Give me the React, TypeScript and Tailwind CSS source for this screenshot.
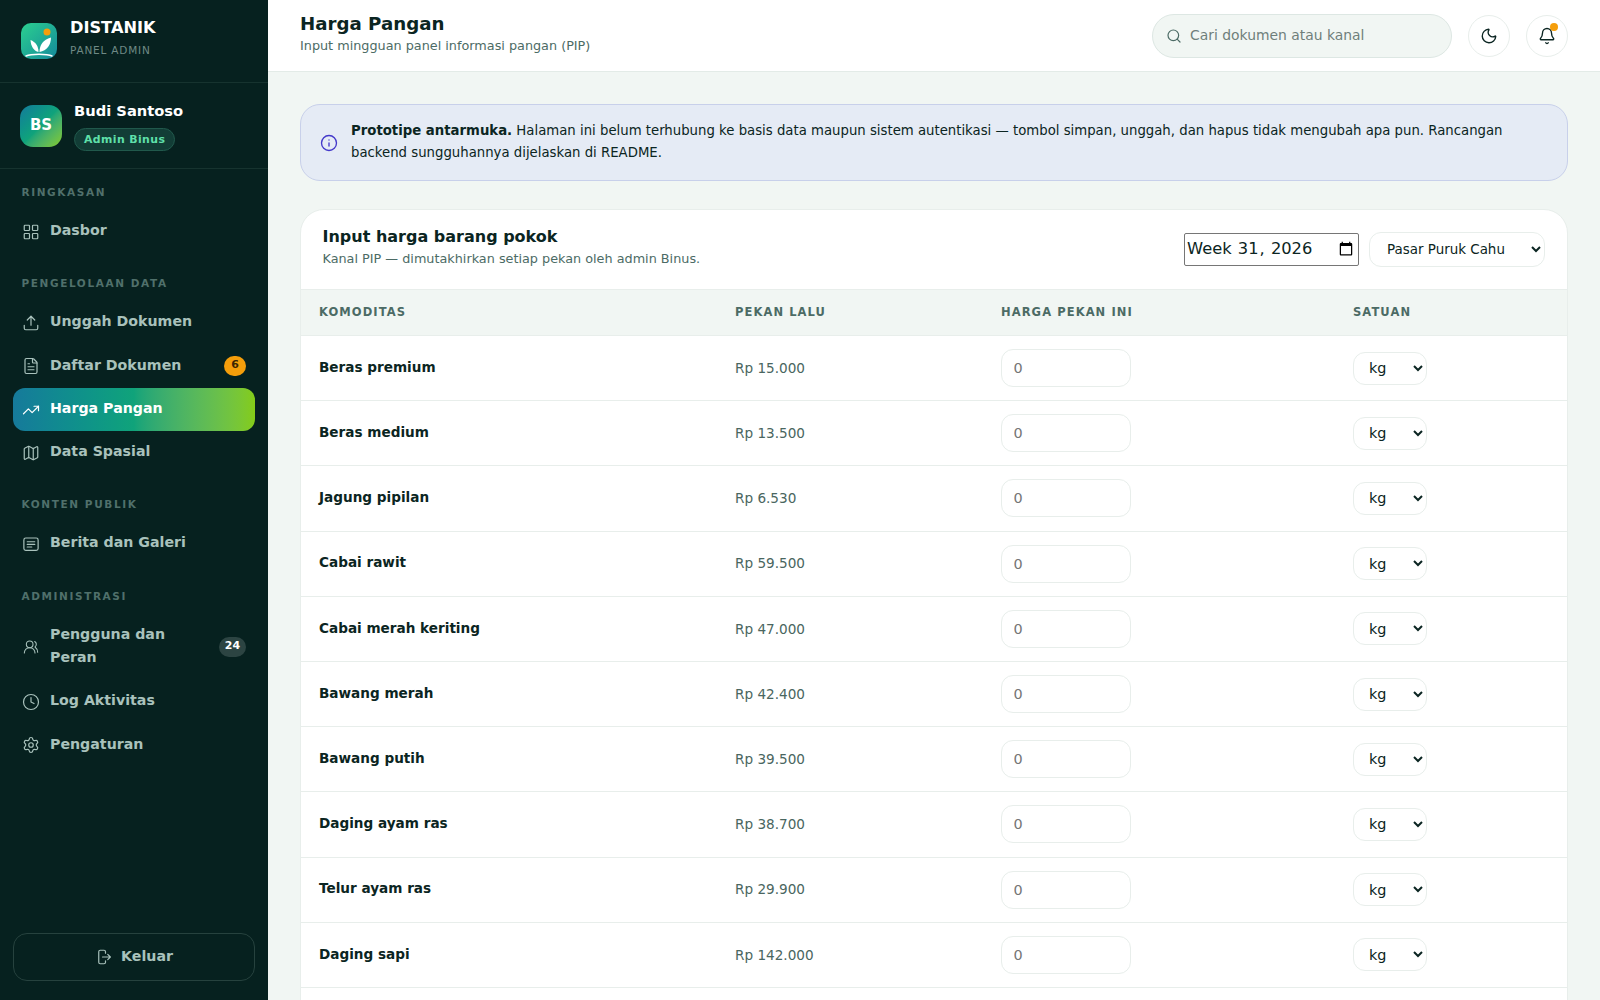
import {
  Bell,
  Clock,
  FileText,
  Info,
  LayoutGrid,
  Map,
  Moon,
  Search,
  Settings,
  TrendingUp,
  Upload,
  UsersRound,
} from "lucide-react";
import type { ComponentType, ReactNode } from "react";

const font = { fontFamily: '"DejaVu Sans", sans-serif' };

type IconProps = { className?: string; strokeWidth?: number };

function NewsIcon({ className, strokeWidth = 1.6 }: IconProps) {
  return (
    <svg viewBox="0 0 24 24" fill="none" stroke="currentColor" strokeWidth={strokeWidth} strokeLinecap="round" className={className}>
      <rect x="2.500" y="4" width="19" height="16.500" rx="2.500" />
      <path d="M7 9h10M7 12.500h10M7 16h6" />
    </svg>
  );
}

function ExitIcon({ className, strokeWidth = 1.6 }: IconProps) {
  return (
    <svg viewBox="0 0 24 24" fill="none" stroke="currentColor" strokeWidth={strokeWidth} strokeLinecap="round" strokeLinejoin="round" className={className}>
      <path d="M14 7V5a2 2 0 0 0-2-2H7a2 2 0 0 0-2 2v14a2 2 0 0 0 2 2h5a2 2 0 0 0 2-2v-2" />
      <path d="M10 12h10M17 8.500l3.500 3.500-3.500 3.500" />
    </svg>
  );
}

// this one sits a bit smaller than the other nav icons
function PeopleIcon({ strokeWidth }: IconProps) {
  return <UsersRound className="mx-px h-4 w-4 shrink-0" strokeWidth={strokeWidth} />;
}

type NavItem = {
  label: string;
  icon: ComponentType<IconProps>;
  active?: boolean;
  badge?: ReactNode;
};

const groups: { title: string; items: NavItem[] }[] = [
  { title: "RINGKASAN", items: [{ label: "Dasbor", icon: LayoutGrid }] },
  {
    title: "PENGELOLAAN DATA",
    items: [
      { label: "Unggah Dokumen", icon: Upload },
      {
        label: "Daftar Dokumen",
        icon: FileText,
        badge: (
          <span className="flex h-5 min-w-[22px] items-center justify-center rounded-full bg-[#f59e0b] pb-[1px] text-[11px] font-bold text-[#3b2503]">
            6
          </span>
        ),
      },
      { label: "Harga Pangan", icon: TrendingUp, active: true },
      { label: "Data Spasial", icon: Map },
    ],
  },
  { title: "KONTEN PUBLIK", items: [{ label: "Berita dan Galeri", icon: NewsIcon }] },
  {
    title: "ADMINISTRASI",
    items: [
      {
        label: "Pengguna dan Peran",
        icon: PeopleIcon,
        badge: (
          <span className="flex h-5 min-w-[27px] items-center justify-center rounded-full bg-[#2c4442] pb-[2px] text-[11px] font-bold text-white">
            24
          </span>
        ),
      },
      { label: "Log Aktivitas", icon: Clock },
      { label: "Pengaturan", icon: Settings },
    ],
  },
];

const prices = [
  ["Beras premium", "Rp 15.000"],
  ["Beras medium", "Rp 13.500"],
  ["Jagung pipilan", "Rp 6.530"],
  ["Cabai rawit", "Rp 59.500"],
  ["Cabai merah keriting", "Rp 47.000"],
  ["Bawang merah", "Rp 42.400"],
  ["Bawang putih", "Rp 39.500"],
  ["Daging ayam ras", "Rp 38.700"],
  ["Telur ayam ras", "Rp 29.900"],
  ["Daging sapi", "Rp 142.000"],
  ["Minyak goreng", "Rp 18.200"],
];

function Sidebar() {
  return (
    <aside className="flex h-screen w-[268px] shrink-0 flex-col bg-[#06211f]">
      <div className="flex h-[83px] items-center gap-[13px] border-b border-[#16332f] pl-[21px]">
        <svg viewBox="0 0 36 36" className="h-9 w-9 shrink-0">
          <defs>
            <linearGradient id="logo" x1="0" y1="0" x2="1" y2="1">
              <stop offset="0" stopColor="#2bd08f" />
              <stop offset="1" stopColor="#14899b" />
            </linearGradient>
          </defs>
          <rect width="36" height="36" rx="10" fill="url(#logo)" />
          <circle cx="26" cy="9" r="3.500" fill="#f59e0b" />
          <path d="M17.500 29c-4.500-1-7.500-5-8-12 5 2 8 6 8 12Z" fill="#fff" />
          <path d="M18.500 29c0-7 3.500-12 11.500-14.500 0 7.500-4 13-11.500 14.500Z" fill="#fff" />
          <path d="M5 33c5-2.500 21-2.500 26 0" fill="none" stroke="#fff" strokeWidth="1.500" strokeLinecap="round" />
        </svg>
        <div className="-mt-[8px]">
          <div className="text-[16.200px] leading-[24px] font-bold text-white">DISTANIK</div>
          <div className="mt-[2px] text-[10.500px] leading-[16px] tracking-[0.8px] text-[#6f8a85]">PANEL ADMIN</div>
        </div>
      </div>
      <div className="flex h-[86px] items-center gap-3 border-b border-[#16332f] pl-5">
        <div className="flex h-[42px] w-[42px] items-center justify-center rounded-[13px] bg-gradient-to-br from-[#167a9b] via-[#10a37a] to-[#84cc16] text-[15px] font-bold text-white">
          BS
        </div>
        <div>
          <div className="text-[14.700px] leading-[22px] font-bold text-white">Budi Santoso</div>
          <span className="mt-[6px] inline-block rounded-full border border-[#21594c] bg-[#123d36] px-[9px] text-[10.900px] leading-[21px] font-bold tracking-[0.4px] text-[#5fe0aa]">
            Admin Binus
          </span>
        </div>
      </div>
      <nav className="flex-1 px-[13px]">
        {groups.map((g) => (
          <div key={g.title} className="pt-[15px] pb-[7px]">
            <div className="px-[8.500px] pb-[9px] text-[10.500px] leading-[17px] font-bold tracking-[1.600px] text-[#50706b]">
              {g.title}
            </div>
            {g.items.map((item) => (
              <div
                key={item.label}
                className={
                  item.active
                    ? "flex items-center gap-[10.500px] rounded-xl bg-gradient-to-r from-[#167a9b] via-[#10a37a] to-[#84cc16] pr-[9px] pl-[8.500px] text-white"
                    : "flex items-center gap-[10.500px] rounded-xl pr-[9px] pl-[8.500px] text-[#a9c2bc]"
                }
              >
                <item.icon className="h-[18px] w-[18px] shrink-0" strokeWidth={1.600} />
                <span className="relative -top-[1px] flex-1 py-[10px] pr-2 text-[14.200px] leading-[23.300px] font-bold">{item.label}</span>
                {item.badge}
              </div>
            ))}
          </div>
        ))}
      </nav>
      <div className="px-[13px] pb-[19px]">
        <div className="flex h-12 items-center justify-center gap-[8px] rounded-[14px] border border-[#26423e] text-[14.200px] font-bold text-[#a9c2bc]">
          <ExitIcon className="h-[18px] w-[18px]" />
          <span className="-mt-[1px]">Keluar</span>
        </div>
      </div>
    </aside>
  );
}

function Topbar() {
  return (
    <header className="flex h-[72px] shrink-0 items-center justify-between border-b border-[#e3ebe7] bg-white pr-8 pl-8">
      <div className="-mt-[6px]">
        <h1 className="text-[18.200px] leading-[26px] font-bold text-[#0b2522]">Harga Pangan</h1>
        <p className="text-[12.800px] leading-[18px] text-[#4c6b65]">Input mingguan panel informasi pangan (PIP)</p>
      </div>
      <div className="flex items-center gap-4">
        <div className="flex h-11 w-[300px] items-center gap-[8px] rounded-[22px] border border-[#dde7e3] bg-[#f1f6f3] pl-[13px]">
          <Search className="h-4 w-4 text-[#4c6b65]" strokeWidth={1.800} />
          <span className="-mt-[1px] text-[13.900px] text-[#6f7f7b]">Cari dokumen atau kanal</span>
        </div>
        <div className="flex h-[42px] w-[42px] items-center justify-center rounded-full border border-[#e8eeeb] text-[#0b2522]">
          <Moon className="h-[18px] w-[18px]" strokeWidth={1.800} />
        </div>
        <div className="relative flex h-[42px] w-[42px] items-center justify-center rounded-full border border-[#e8eeeb] text-[#0b2522]">
          <Bell className="h-[18px] w-[18px]" strokeWidth={1.800} />
          <span className="absolute top-[7.500px] right-[9px] h-2 w-2 rounded-full bg-[#f59e0b]" />
        </div>
      </div>
    </header>
  );
}

function PriceTable() {
  return (
    <table className="w-full table-fixed border-collapse text-left">
      <colgroup>
        <col className="w-[416px]" />
        <col className="w-[266px]" />
        <col className="w-[352px]" />
        <col />
      </colgroup>
      <thead>
        <tr className="h-[46px] border-y border-[#e8eeeb] bg-[#f1f6f3] text-[11.500px] font-bold tracking-[1.080px] text-[#4c6b65]">
          <th className="px-[18px] pt-[1px] font-bold">KOMODITAS</th>
          <th className="px-[18px] pt-[1px] font-bold">PEKAN LALU</th>
          <th className="px-[18px] pt-[1px] font-bold">HARGA PEKAN INI</th>
          <th className="px-[18px] pt-[1px] font-bold">SATUAN</th>
        </tr>
      </thead>
      <tbody>
        {prices.map(([name, last]) => (
          <tr key={name} className="h-[65.200px] border-b border-[#e8eeeb]">
            <td className="px-[18px] text-[13.600px] font-bold text-[#0b2522]">
              <span className="relative -top-[1px]">{name}</span>
            </td>
            <td className="px-[18px] text-[13.600px] text-[#4a6660]">{last}</td>
            <td className="px-[18px]">
              <input
                placeholder="0"
                className="h-[38px] w-[130px] rounded-[12px] border border-[#e8eeeb] px-[11.500px] text-[14.400px] placeholder:text-[#757575]"
              />
            </td>
            <td className="px-[18px]">
              <select className="h-[33px] w-[74px] rounded-[12px] border border-[#e8eeeb] pl-[11px] text-[14.400px] text-[#0b2522]">
                <option>kg</option>
              </select>
            </td>
          </tr>
        ))}
      </tbody>
    </table>
  );
}

export default function App() {
  return (
    <div className="flex h-screen overflow-hidden bg-[#f1f6f3]" style={font}>
      <Sidebar />
      <main className="flex min-w-0 flex-1 flex-col">
        <Topbar />
        <div className="flex-1 overflow-hidden px-8 pt-8">
          <div className="flex h-[77px] items-center gap-[13px] rounded-[20px] border border-[#c8d0ea] bg-[#e5ebf5] pr-5 pl-[19px]">
            <Info className="h-[18px] w-[18px] shrink-0 text-[#4338ca]" strokeWidth={1.800} />
            <p className="-mt-[1px] text-[13.280px] leading-[22px] text-[#0b2522]">
              <b>Prototipe antarmuka.</b> Halaman ini belum terhubung ke basis data maupun sistem autentikasi — tombol
              simpan, unggah, dan hapus tidak mengubah apa pun. Rancangan backend sungguhannya dijelaskan di README.
            </p>
          </div>
          <section className="mt-7 overflow-hidden rounded-t-[24px] border border-[#e8eeeb] bg-white">
            <div className="flex h-[79px] items-center justify-between pr-[22px] pl-[21.500px]">
              <div className="-mt-[8px]">
                <h2 className="text-[16px] leading-[26px] font-bold text-[#0b2522]">Input harga barang pokok</h2>
                <p className="text-[12.800px] leading-[18px] text-[#4c6b65]">
                  Kanal PIP — dimutakhirkan setiap pekan oleh admin Binus.
                </p>
              </div>
              <div className="flex items-center gap-[10px]">
                <input
                  type="week"
                  defaultValue="2026-W31"
                  className="h-[33px] w-[175px] rounded-[2px] border border-[#767676] px-[2px] text-[16.300px] text-[#0b2522]"
                />
                <select className="h-[35px] w-[176px] rounded-[12px] border border-[#e8eeeb] pl-[13px] text-[13.440px] text-[#0b2522]">
                  <option>Pasar Puruk Cahu</option>
                </select>
              </div>
            </div>
            <PriceTable />
          </section>
        </div>
      </main>
    </div>
  );
}
